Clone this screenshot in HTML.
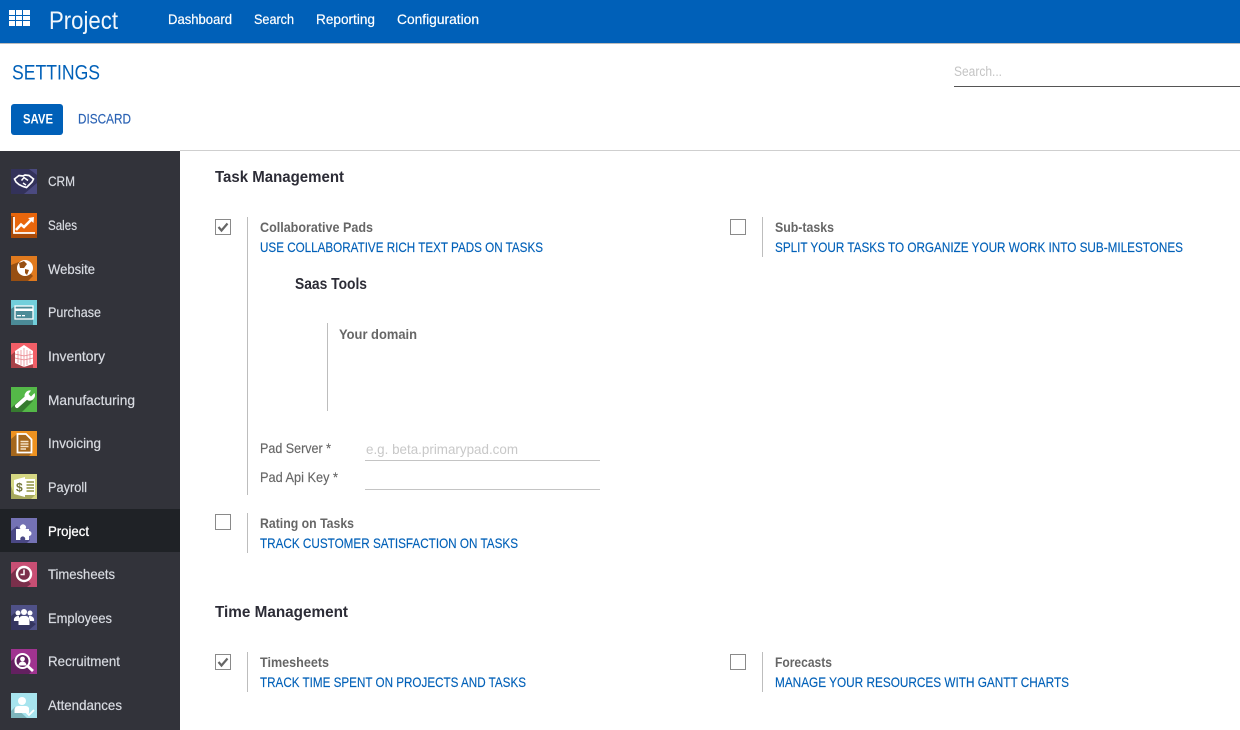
<!DOCTYPE html>
<html lang="en">
<head>
<meta charset="utf-8">
<title>Settings</title>
<style>
html,body{margin:0;padding:0;background:#fff;width:1240px;height:730px;overflow:hidden}
svg{display:block}
text{font-family:"Liberation Sans",sans-serif;font-size:14px;white-space:pre}
.nav{fill:#fff;font-size:14px;stroke:#fff;stroke-width:.2px}
.side{fill:#d8dbe1;font-size:14px;stroke:#d8dbe1;stroke-width:.2px}
.h{fill:#2c2c36;font-weight:bold;font-size:16px}
.l{fill:#666;font-weight:bold;font-size:14px}
.t{fill:#0060b8;font-size:14px;stroke:#0060b8;stroke-width:.15px}
.f{fill:#666;font-size:14px;stroke:#666;stroke-width:.15px}
.box{fill:#fff;stroke:#8a8a8a;stroke-width:1}
.v{fill:#bdbdbd}
</style>
</head>
<body>
<svg width="1240" height="730" viewBox="0 0 1240 730" xmlns="http://www.w3.org/2000/svg">
<rect width="1240" height="730" fill="#fff"/>
<!-- top bar -->
<rect width="1240" height="43" fill="#0060b8"/>
<rect y="43" width="1240" height="1" fill="#bcbcbc"/>
<g fill="#fff">
<rect x="9" y="10" width="6" height="5"/><rect x="16" y="10" width="6" height="5"/><rect x="23" y="10" width="7" height="5"/>
<rect x="9" y="16" width="6" height="4"/><rect x="16" y="16" width="6" height="4"/><rect x="23" y="16" width="7" height="4"/>
<rect x="9" y="21" width="6" height="5"/><rect x="16" y="21" width="6" height="5"/><rect x="23" y="21" width="7" height="5"/>
</g>
<text x="49" y="29" fill="#f2f7fc" style="font-size:25px" textLength="69" lengthAdjust="spacingAndGlyphs">Project</text>
<text class="nav" x="168" y="24" textLength="64" lengthAdjust="spacingAndGlyphs">Dashboard</text>
<text class="nav" x="254" y="24" textLength="40" lengthAdjust="spacingAndGlyphs">Search</text>
<text class="nav" x="316" y="24" textLength="59" lengthAdjust="spacingAndGlyphs">Reporting</text>
<text class="nav" x="397" y="24" textLength="82" lengthAdjust="spacingAndGlyphs">Configuration</text>
<!-- control panel -->
<text x="12" y="79.500" fill="#0060b8" style="font-size:21px" textLength="88" lengthAdjust="spacingAndGlyphs">SETTINGS</text>
<rect x="11" y="104" width="52" height="31" rx="3" fill="#0060b8"/>
<text x="23" y="123.500" fill="#fff" style="font-size:14px;font-weight:bold" textLength="30" lengthAdjust="spacingAndGlyphs">SAVE</text>
<text x="78" y="123.500" fill="#2a62b4" style="font-size:14px;stroke:#2a62b4;stroke-width:.15px" textLength="53" lengthAdjust="spacingAndGlyphs">DISCARD</text>
<text x="954" y="76" fill="#c4c4c4" style="font-size:13.500px" textLength="48" lengthAdjust="spacingAndGlyphs">Search...</text>
<rect x="954" y="86" width="286" height="1" fill="#555"/>
<rect x="180" y="150" width="1060" height="1" fill="#cfcfcf"/>
<!-- sidebar -->
<rect x="0" y="151" width="180" height="579" fill="#32333a"/>
<rect x="0" y="509" width="180" height="43" fill="#1f2226"/>
<!-- CRM -->
<g transform="translate(11,169)"><rect width="26" height="25" fill="#4b4a80"/><polygon points="0,0 18,0 26,6 26,14 13,25 0,25" fill="#33325a"/><path d="M3.500 10 L8 6.500 L12 7 L14 6 L18 6.500 L22.500 10 L21 13 L15.500 18.500 L12 17.500 L8 15.500 L5 13 Z" fill="none" stroke="#fff" stroke-width="1.700"/><path d="M10.500 11.500 L13 8.500 L17 11.500 M12 14 L15 16" fill="none" stroke="#fff" stroke-width="1.500"/></g>
<!-- Sales -->
<g transform="translate(11,213)"><rect width="26" height="25" fill="#e8660c"/><polygon points="0,3 3,3 3,20 24,20 26,22 26,25 0,25" fill="#a94a08"/><path d="M3 4 V20 H24" fill="none" stroke="#fff" stroke-width="1.800"/><path d="M5 17 L10 11.500 L13 14 L20 7" fill="none" stroke="#fff" stroke-width="2.600"/><polygon points="17,5 23,4 22.500,10" fill="#fff"/></g>
<!-- Website -->
<g transform="translate(11,256)"><rect width="26" height="25" fill="#e07a1e"/><polygon points="0,9 8,6 22,20 17,25 0,25" fill="#974f12"/><circle cx="14" cy="12" r="8" fill="#fff"/><path d="M8 7 L13 5 L16 8 L13 12 L9 12 Z M14 13 L18 14 L16 19 L14 17 Z" fill="#974f12"/></g>
<!-- Purchase -->
<g transform="translate(11,300)"><rect width="26" height="25" fill="#72cfdb"/><polygon points="0,9 4,6 22,19 22,25 0,25" fill="#4b8b97"/><rect x="4" y="6" width="18" height="13" fill="#4b8b97" stroke="#fff" stroke-width="1.300"/><rect x="4" y="8.500" width="18" height="2.500" fill="#fff"/><rect x="6" y="15" width="4" height="1.300" fill="#fff"/><rect x="11" y="15" width="3" height="1.300" fill="#fff"/></g>
<!-- Inventory -->
<g transform="translate(11,343)"><rect width="26" height="25" fill="#f25f67"/><polygon points="0,12 5,8 22,22 22,25 0,25" fill="#a84248"/><polygon points="4,8 13,2 22,8 22,21 13,24 4,20" fill="#fff"/><path d="M7 8 V20 M10 7 V22 M13 5 V24 M16 7 V22 M19 8 V20 M4 11 L13 13 L22 11 M4 15 L13 17 L22 15" stroke="#e88088" stroke-width="0.700" fill="none"/></g>
<!-- Manufacturing -->
<g transform="translate(11,387)"><rect width="26" height="25" fill="#54b848"/><polygon points="0,21 15,8 22,14 11,25 0,25" fill="#367a2f"/><path d="M6 19 L15 11" stroke="#fff" stroke-width="4" stroke-linecap="round" fill="none"/><path d="M14 11 A5.500 5.500 0 0 1 20 3.500 L17.500 7 L20 9.500 L23.500 6 A5.500 5.500 0 0 1 17 13.500 Z" fill="#fff"/></g>
<!-- Invoicing -->
<g transform="translate(11,431)"><rect width="26" height="25" fill="#ee9220"/><polygon points="0,8 6,3 22,21 18,25 0,25" fill="#a5671c"/><polygon points="6.500,3 15,3 20.500,8.500 20.500,21.500 6.500,21.500" fill="#a5671c" stroke="#fff" stroke-width="1.800"/><path d="M9.500 10.500 H17.500 M9.500 13 H17.500 M9.500 15.500 H17.500 M9.500 18 H15" stroke="#f5e3c7" stroke-width="1.500"/></g>
<!-- Payroll -->
<g transform="translate(11,474)"><rect width="26" height="25" fill="#d5d783"/><polygon points="0,12 3,20 25,20 20,25 0,25" fill="#a6a85d"/><rect x="13" y="5" width="11" height="16" fill="#fff"/><path d="M15.500 8 H23 M15.500 11 H23 M15.500 14 H23 M15.500 17 H23" stroke="#a0a35c" stroke-width="1.800"/><polygon points="3,6 14,3 14,23 3,20" fill="#fff"/><text x="5" y="17.500" fill="#75783c" style="font-size:12px;font-weight:bold">$</text></g>
<!-- Project -->
<g transform="translate(11,518)"><rect width="26" height="25" fill="#7472b4"/><polygon points="0,13 6,8 19,22 16,25 0,25" fill="#4a4884"/><path d="M5 11 H9.500 A3 3 0 1 1 14.500 11 H18 V13 A2.500 2.500 0 1 1 18 18 V22 H14 A2.500 2.500 0 1 0 9.500 22 H5 Z" fill="#fff"/></g>
<!-- Timesheets -->
<g transform="translate(11,562)"><rect width="26" height="25" fill="#c84f74"/><polygon points="0,12 6,6 20,22 16,25 0,25" fill="#7a2f4b"/><circle cx="13" cy="12" r="7" fill="#7a2f4b" stroke="#fff" stroke-width="2.400"/><path d="M13 7.500 V12.500 H9.500" stroke="#fff" stroke-width="1.500" fill="none"/></g>
<!-- Employees -->
<g transform="translate(11,605)"><rect width="26" height="25" fill="#4f5187"/><polygon points="0,11 5,7 25,19 18,25 0,25" fill="#353660"/><g fill="#fff"><circle cx="13" cy="7" r="3"/><circle cx="7" cy="8" r="2.500"/><circle cx="19" cy="8" r="2.500"/><path d="M3 16 A4 4 0 0 1 7 11 H8 V16 Z M23 16 A4 4 0 0 0 19 11 H18 V16 Z M7.500 20 V15 A4 4 0 0 1 11 11 H15 A4 4 0 0 1 18.500 15 V20 Z"/></g></g>
<!-- Recruitment -->
<g transform="translate(11,649)"><rect width="26" height="25" fill="#a03390"/><polygon points="0,12 7,6 20,23 18,25 0,25" fill="#632060"/><circle cx="11.500" cy="12" r="7" fill="#632060" stroke="#fff" stroke-width="2"/><path d="M16.500 17 L22 22" stroke="#fff" stroke-width="2.800"/><circle cx="11.500" cy="10" r="2.400" fill="#fff"/><path d="M7.500 16.500 A4 4 0 0 1 15.500 16.500 Z" fill="#fff"/></g>
<!-- Attendances -->
<g transform="translate(11,693)"><rect width="26" height="25" fill="#a7e4ee"/><polygon points="0,18 4,14 16,25 0,25" fill="#7db5bc"/><circle cx="11" cy="8" r="4" fill="#fff"/><path d="M3.500 20 V16 A4 4 0 0 1 7.500 13 H14.500 A4 4 0 0 1 18 15 V20 Z" fill="#fff"/><path d="M15 19 L18 22 L23 17" fill="none" stroke="#fff" stroke-width="1.800"/></g>
<text class="side" x="48" y="186" textLength="27" lengthAdjust="spacingAndGlyphs">CRM</text>
<text class="side" x="48" y="230" textLength="29" lengthAdjust="spacingAndGlyphs">Sales</text>
<text class="side" x="48" y="274" textLength="47" lengthAdjust="spacingAndGlyphs">Website</text>
<text class="side" x="48" y="317" textLength="53" lengthAdjust="spacingAndGlyphs">Purchase</text>
<text class="side" x="48" y="361" textLength="57" lengthAdjust="spacingAndGlyphs">Inventory</text>
<text class="side" x="48" y="405" textLength="87" lengthAdjust="spacingAndGlyphs">Manufacturing</text>
<text class="side" x="48" y="448" textLength="53" lengthAdjust="spacingAndGlyphs">Invoicing</text>
<text class="side" x="48" y="492" textLength="39" lengthAdjust="spacingAndGlyphs">Payroll</text>
<text x="48" y="536" fill="#fff" style="font-size:14px;stroke:#fff;stroke-width:.3px" textLength="41" lengthAdjust="spacingAndGlyphs">Project</text>
<text class="side" x="48" y="579" textLength="67" lengthAdjust="spacingAndGlyphs">Timesheets</text>
<text class="side" x="48" y="623" textLength="64" lengthAdjust="spacingAndGlyphs">Employees</text>
<text class="side" x="48" y="666" textLength="72" lengthAdjust="spacingAndGlyphs">Recruitment</text>
<text class="side" x="48" y="710" textLength="74" lengthAdjust="spacingAndGlyphs">Attendances</text>
<!-- content -->
<text class="h" x="215" y="182" textLength="129" lengthAdjust="spacingAndGlyphs">Task Management</text>
<rect class="v" x="247" y="217" width="1" height="278"/>
<rect class="box" x="215.500" y="219.500" width="15" height="15"/>
<path d="M218.500 227 L221.500 230.500 L227.500 223.500" fill="none" stroke="#666" stroke-width="2.200"/>
<text class="l" x="260" y="232" textLength="113" lengthAdjust="spacingAndGlyphs">Collaborative Pads</text>
<text class="t" x="260" y="252" textLength="283" lengthAdjust="spacingAndGlyphs">USE COLLABORATIVE RICH TEXT PADS ON TASKS</text>
<text class="h" x="295" y="289" textLength="72" lengthAdjust="spacingAndGlyphs">Saas Tools</text>
<rect class="v" x="327" y="323" width="1" height="88"/>
<text class="l" x="339" y="339" textLength="78" lengthAdjust="spacingAndGlyphs">Your domain</text>
<text class="f" x="260" y="453" textLength="71" lengthAdjust="spacingAndGlyphs">Pad Server *</text>
<text x="366" y="454" fill="#c8c8c8" style="font-size:14px" textLength="152" lengthAdjust="spacingAndGlyphs">e.g. beta.primarypad.com</text>
<rect x="365" y="460" width="235" height="1" fill="#c4c4c4"/>
<text class="f" x="260" y="482" textLength="78" lengthAdjust="spacingAndGlyphs">Pad Api Key *</text>
<rect x="365" y="489" width="235" height="1" fill="#c4c4c4"/>
<rect class="box" x="730.500" y="219.500" width="15" height="15"/>
<rect class="v" x="762" y="217" width="1" height="40"/>
<text class="l" x="775" y="232" textLength="59" lengthAdjust="spacingAndGlyphs">Sub-tasks</text>
<text class="t" x="775" y="252" textLength="408" lengthAdjust="spacingAndGlyphs">SPLIT YOUR TASKS TO ORGANIZE YOUR WORK INTO SUB-MILESTONES</text>
<rect class="box" x="215.500" y="514.500" width="15" height="15"/>
<rect class="v" x="247" y="513" width="1" height="40"/>
<text class="l" x="260" y="528" textLength="94" lengthAdjust="spacingAndGlyphs">Rating on Tasks</text>
<text class="t" x="260" y="548" textLength="258" lengthAdjust="spacingAndGlyphs">TRACK CUSTOMER SATISFACTION ON TASKS</text>
<text class="h" x="215" y="617" textLength="133" lengthAdjust="spacingAndGlyphs">Time Management</text>
<rect class="box" x="215.500" y="654.500" width="15" height="15"/>
<path d="M218.500 662 L221.500 665.500 L227.500 658.500" fill="none" stroke="#666" stroke-width="2.200"/>
<rect class="v" x="247" y="652" width="1" height="40"/>
<text class="l" x="260" y="667" textLength="69" lengthAdjust="spacingAndGlyphs">Timesheets</text>
<text class="t" x="260" y="687" textLength="266" lengthAdjust="spacingAndGlyphs">TRACK TIME SPENT ON PROJECTS AND TASKS</text>
<rect class="box" x="730.500" y="654.500" width="15" height="15"/>
<rect class="v" x="762" y="652" width="1" height="40"/>
<text class="l" x="775" y="667" textLength="57" lengthAdjust="spacingAndGlyphs">Forecasts</text>
<text class="t" x="775" y="687" textLength="294" lengthAdjust="spacingAndGlyphs">MANAGE YOUR RESOURCES WITH GANTT CHARTS</text>
</svg>
</body>
</html>
